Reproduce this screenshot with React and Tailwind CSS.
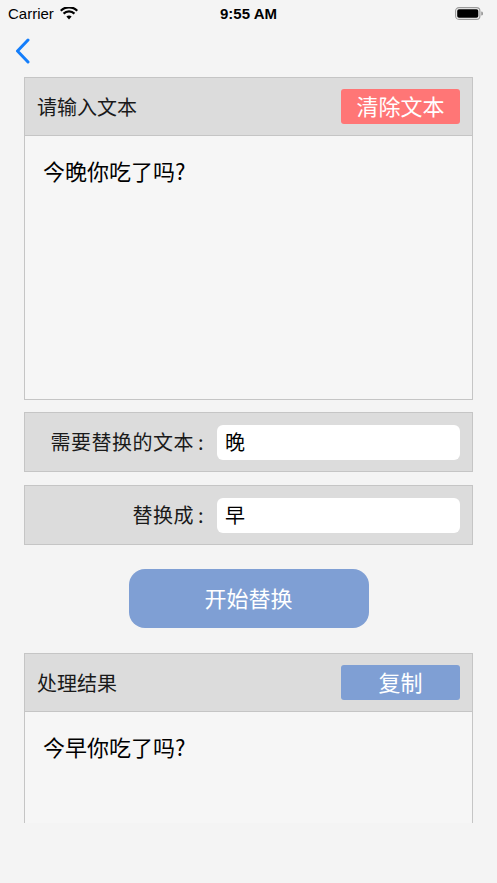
import { useState } from "react";

const cjk = { fontFamily: '"Noto Sans CJK SC", "Noto Sans", sans-serif' };

function StatusBar() {
  return (
    <div
      className="relative h-[26px] flex items-center px-2 text-black"
      style={{ fontFamily: '"Liberation Sans", Arial, sans-serif' }}
    >
      <div className="flex items-center gap-[6px]">
        <span className="text-[15px] leading-none">Carrier</span>
        <svg width="18" height="13" viewBox="0 0 18 13">
          <path d="M9 12.5 6.4 9.6a3.8 3.8 0 0 1 5.2 0Z" fill="#000" />
          <path d="M4.3 7.4a6.6 6.6 0 0 1 9.4 0l1.5-1.6a8.8 8.8 0 0 0-12.4 0Z" fill="#000" />
          <path d="M1.5 4.5a10.6 10.6 0 0 1 15 0L18 2.9a12.8 12.8 0 0 0-18 0Z" fill="#000" />
        </svg>
      </div>
      <span className="absolute left-1/2 -translate-x-1/2 text-[15px] font-bold leading-none">
        9:55 AM
      </span>
      <div className="ml-auto flex items-center mr-[6px]">
        <svg width="28" height="13" viewBox="0 0 28 13">
          <rect x="0.6" y="0.6" width="24.3" height="11.8" rx="3.4" fill="none" stroke="#9a9a9a" strokeWidth="1.1" />
          <rect x="2.2" y="2.2" width="21.1" height="8.6" rx="1.8" fill="#000" />
          <path d="M26.2 4.5v4a2 2 0 0 0 0-4Z" fill="#9a9a9a" />
        </svg>
      </div>
    </div>
  );
}

function Panel({ title, button, buttonClass, text, bottom = true, bodyHeight }) {
  return (
    <div
      className={`mx-6 border border-[#c5c5c5] ${bottom ? "" : "border-b-0"}`}
    >
      <div className="h-[58px] bg-[#dcdcdc] flex items-center justify-between pl-3 pr-3 border-b border-[#c5c5c5]">
        <span className="text-[20px] text-[#1a1a1a]">{title}</span>
        <button
          className={`w-[119px] h-[35px] rounded-[3px] text-white text-[22px] flex items-center justify-center pb-[3px] ${buttonClass}`}
        >
          {button}
        </button>
      </div>
      <div className={`bg-[#f6f6f6] pl-[18px] pt-[19px] ${bodyHeight}`}>
        <p className="text-[22px] text-black leading-[30px]">{text}</p>
      </div>
    </div>
  );
}

function Row({ label, value }) {
  return (
    <div className="mx-6 h-[60px] border border-[#c5c5c5] bg-[#dcdcdc] flex items-center pr-3">
      <span className="w-[179px] text-right text-[20px] text-[#1a1a1a] shrink-0 tracking-[0.5px]">
        {label}
        <span className="ml-[4px]">:</span>
      </span>
      <div className="ml-[13px] flex-1 h-[35px] bg-white rounded-[6px] flex items-center px-2">
        <span className="text-[20px] text-black">{value}</span>
      </div>
    </div>
  );
}

export default function App() {
  const [src] = useState("今晚你吃了吗?");
  return (
    <div className="w-[497px] h-[883px] bg-[#f4f4f4] overflow-hidden" style={cjk}>
      <StatusBar />
      <div className="h-[51px] flex items-center pl-[14px]">
        <svg width="18" height="26" viewBox="0 0 18 26" className="mt-[-2px]">
          <path d="M14 2 3.5 13 14 24" fill="none" stroke="#147efb" strokeWidth="3" strokeLinecap="round" strokeLinejoin="round" />
        </svg>
      </div>
      <Panel
        title="请输入文本"
        button="清除文本"
        buttonClass="bg-[#ff7676]"
        text={src}
        bodyHeight="h-[263px]"
      />
      <div className="mt-3 flex flex-col gap-[13px]">
        <Row label="需要替换的文本" value="晚" />
        <Row label="替换成" value="早" />
      </div>
      <div className="mt-[24px] flex justify-center">
        <button className="w-[240px] h-[59px] rounded-[16px] bg-[#7f9fd4] text-white text-[22px] flex items-center justify-center pb-[3px]">
          开始替换
        </button>
      </div>
      <div className="mt-[25px]">
        <Panel
          title="处理结果"
          button="复制"
          buttonClass="bg-[#7f9fd4]"
          text="今早你吃了吗?"
          bottom={false}
          bodyHeight="h-[111px]"
        />
      </div>
    </div>
  );
}
